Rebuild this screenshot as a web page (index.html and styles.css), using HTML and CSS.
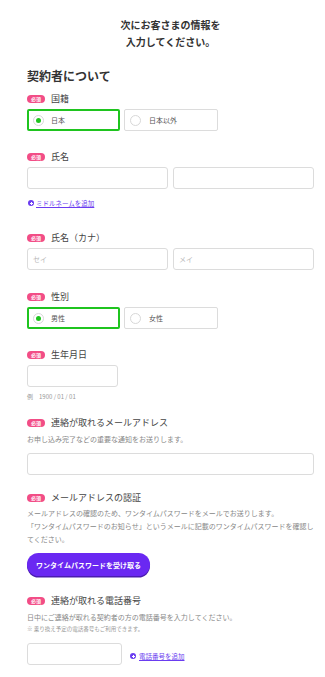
FILE: index.html
```html
<!DOCTYPE html>
<html lang="ja">
<head>
<meta charset="utf-8">
<link rel="stylesheet" href="styles.css">
</head>
<body>
<div class="page">
  <h1 class="title">次にお客さまの情報を<br>入力してください。</h1>
  <h2 class="heading">契約者について</h2>

  <section class="field f-nation">
    <div class="label"><span class="badge">必須</span><span class="label-text">国籍</span></div>
    <div class="radios">
      <div class="radio selected"><span class="dot"></span><span class="radio-text">日本</span></div>
      <div class="radio"><span class="dot"></span><span class="radio-text">日本以外</span></div>
    </div>
  </section>

  <section class="field f-name">
    <div class="label"><span class="badge">必須</span><span class="label-text">氏名</span></div>
    <div class="pair">
      <div class="input"></div>
      <div class="input"></div>
    </div>
    <a class="add-link link-middle"><span class="plus"></span><span class="add-text">ミドルネームを追加</span></a>
  </section>

  <section class="field f-kana">
    <div class="label"><span class="badge">必須</span><span class="label-text">氏名（カナ）</span></div>
    <div class="pair">
      <div class="input"><span class="ph">セイ</span></div>
      <div class="input"><span class="ph">メイ</span></div>
    </div>
  </section>

  <section class="field f-sex">
    <div class="label"><span class="badge">必須</span><span class="label-text">性別</span></div>
    <div class="radios">
      <div class="radio selected"><span class="dot"></span><span class="radio-text">男性</span></div>
      <div class="radio"><span class="dot"></span><span class="radio-text">女性</span></div>
    </div>
  </section>

  <section class="field f-birth">
    <div class="label"><span class="badge">必須</span><span class="label-text">生年月日</span></div>
    <div class="input input-birth"></div>
    <p class="hint">例　1900 / 01 / 01</p>
  </section>

  <section class="field f-mail">
    <div class="label"><span class="badge">必須</span><span class="label-text">連絡が取れるメールアドレス</span></div>
    <p class="desc desc-mail">お申し込み完了などの重要な通知をお送りします。</p>
    <div class="input"></div>
  </section>

  <section class="field f-auth">
    <div class="label"><span class="badge">必須</span><span class="label-text">メールアドレスの認証</span></div>
    <p class="desc desc-auth">メールアドレスの確認のため、ワンタイムパスワードをメールでお送りします。<br>「ワンタイムパスワードのお知らせ」というメールに記載のワンタイムパスワードを確認してください。</p>
    <button class="otp-btn">ワンタイムパスワードを受け取る</button>
  </section>

  <section class="field f-tel">
    <div class="label"><span class="badge">必須</span><span class="label-text">連絡が取れる電話番号</span></div>
    <p class="desc desc-tel">日中にご連絡が取れる契約者の方の電話番号を入力してください。</p>
    <p class="note">※ 乗り換え予定の電話番号もご利用できます。</p>
    <div class="tel-row">
      <div class="input input-tel"></div>
      <a class="add-link"><span class="plus"></span><span class="add-text">電話番号を追加</span></a>
    </div>
  </section>
</div>
</body>
</html>
```

FILE: styles.css
```css
* { box-sizing: border-box; }
html, body { margin: 0; padding: 0; background: #fff; }
body {
  font-family: "Noto Sans CJK JP", "Noto Sans", sans-serif;
  color: #333;
}
.page {
  width: 325px;
  padding: 16px 11px 20px 27px;
}
.title {
  margin: 0;
  font-size: 10px;
  line-height: 17px;
  font-weight: 700;
  text-align: center;
  color: #333;
  padding-left: 0;
  margin-left: -8px;
  margin-right: -8px;
}
.heading {
  margin: 18px 0 0;
  font-size: 12px;
  line-height: 16px;
  font-weight: 700;
  color: #333;
}
.field { display: flex; flex-direction: column; }
.label {
  display: flex;
  align-items: center;
  height: 12px;
  gap: 6px;
}
.badge {
  display: inline-flex;
  align-items: center;
  justify-content: center;
  width: 18px;
  height: 8px;
  border-radius: 4px;
  background: #f24d86;
  color: #fff;
  font-size: 5px;
  line-height: 8px;
  font-weight: 700;
}
.label-text {
  font-size: 9px;
  line-height: 12px;
  color: #444;
}
.f-nation { margin-top: 9px; }
.f-name { margin-top: 20px; }
.f-kana { margin-top: 24px; }
.f-sex { margin-top: 21px; }
.f-birth { margin-top: 20px; }
.f-mail { margin-top: 15px; }
.f-auth { margin-top: 17px; }
.f-tel { margin-top: 19px; }

.radios { display: flex; gap: 4px; margin-top: 4px; }
.radio {
  width: 93px;
  height: 22px;
  border: 1px solid #dcdcdc;
  border-radius: 2px;
  display: flex;
  align-items: center;
  padding-left: 5px;
  gap: 8px;
}
.radio + .radio { width: 94px; }
.radio.selected {
  border: 2px solid #1fc41f;
  padding-left: 4px;
  gap: 7px;
}
.dot {
  width: 11px;
  height: 11px;
  border-radius: 50%;
  border: 1px solid #d8d8d8;
  background: #fff;
  display: flex;
  align-items: center;
  justify-content: center;
  flex: none;
}
.selected .dot::after {
  content: "";
  width: 5px;
  height: 5px;
  border-radius: 50%;
  background: #1fc41f;
}
.radio-text { font-size: 7px; color: #555; line-height: 10px; }

.pair { display: flex; gap: 5px; margin-top: 4px; }
.pair .input { flex: 1; }
.input {
  height: 22px;
  border: 1px solid #dcdcdc;
  border-radius: 3px;
  background: #fff;
  display: flex;
  align-items: center;
  padding-left: 5px;
}
.f-mail .input { margin-top: 8px; }
.ph { font-size: 7px; color: #b8b8b8; }
.input-birth { width: 91px; margin-top: 4px; }
.hint {
  margin: 5px 0 0;
  font-size: 6px;
  line-height: 10px;
  color: #999;
}

.add-link {
  display: inline-flex;
  align-items: center;
  gap: 2px;
  color: #6a3cf0;
  cursor: pointer;
}
.link-middle { margin-top: 9px; align-self: flex-start; padding-left: 1px; height: 10px; }
.plus {
  position: relative;
  width: 6px;
  height: 6px;
  border-radius: 50%;
  background: #6a3cf0;
  flex: none;
}
.plus::before, .plus::after {
  content: "";
  position: absolute;
  background: #fff;
}
.plus::before { left: 1.5px; top: 2.5px; width: 3px; height: 1px; }
.plus::after { left: 2.5px; top: 1.5px; width: 1px; height: 3px; }
.add-text {
  font-size: 6.5px;
  line-height: 10px;
  text-decoration: underline;
  text-underline-offset: 1px;
}

.desc {
  margin: 4px 0 0;
  font-size: 7px;
  line-height: 12px;
  color: #888;
}
.desc-auth { margin-top: 3px; line-height: 13px; }
.otp-btn {
  margin-top: 7px;
  align-self: flex-start;
  width: 123px;
  height: 23px;
  border: none;
  border-radius: 12px;
  background: #6a28f2;
  box-shadow: 0 1.5px 0 #4a1cb0;
  color: #fff;
  font-family: "Noto Sans CJK JP", sans-serif;
  font-size: 7px;
  font-weight: 700;
  padding: 0;
}
.note {
  margin: 1px 0 0;
  font-size: 5.5px;
  line-height: 10px;
  color: #999;
}
.tel-row {
  display: flex;
  align-items: center;
  gap: 8px;
  margin-top: 9px;
}
.input-tel { width: 95px; flex: none; }
.tel-row .add-link { margin-top: 4px; gap: 3px; }
```
